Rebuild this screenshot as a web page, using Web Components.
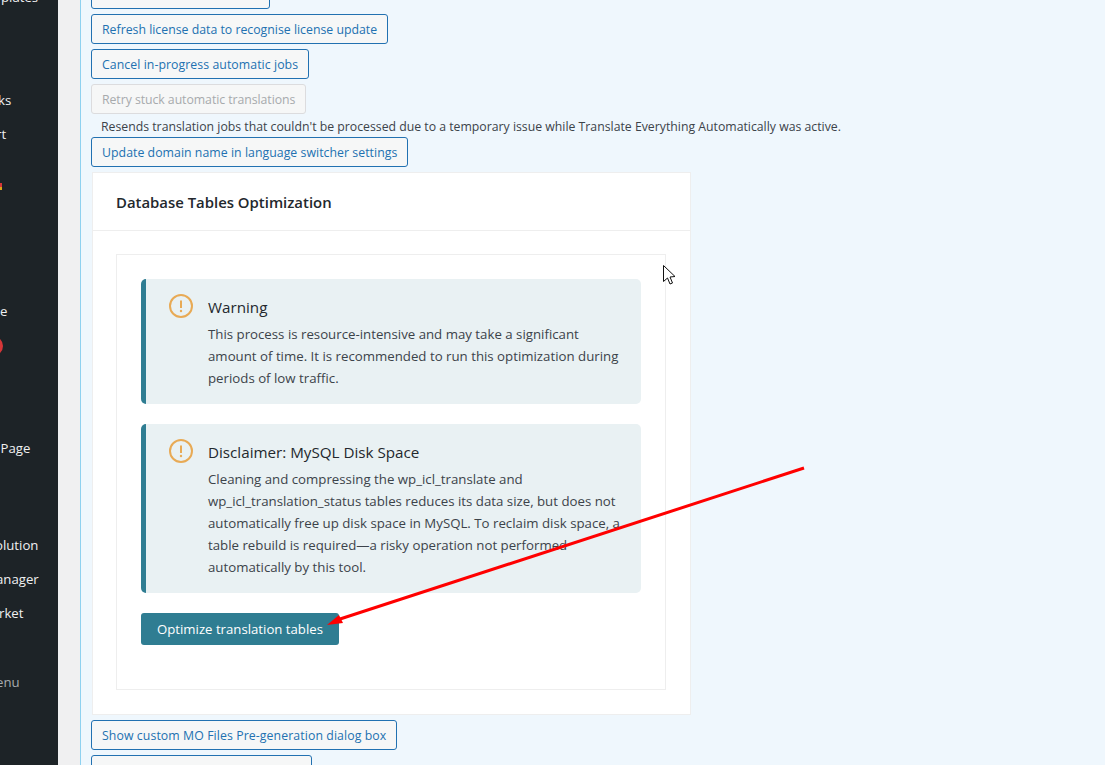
<!DOCTYPE html>
<html lang="en">
<head>
<meta charset="utf-8">
<title>Database Tables Optimization</title>
<style>
html,body{margin:0;height:765px;overflow:hidden;background:#f0f0f1}
body{font-family:"Open Sans","Noto Sans",sans-serif;font-size:13px}
</style>
</head>
<body>
<admin-shell>
  <side-menu slot="side">
    <side-item top="-12" shift="1">plates</side-item>
    <side-item top="85" shift="-2">ks</side-item>
    <side-item top="16" shift="-4">rt</side-item>
    <side-flag top="40"></side-flag>
    <side-item top="112" shift="0">e</side-item>
    <side-badge top="16"></side-badge>
    <side-item top="83" shift="0.5">Page</side-item>
    <side-item top="79" shift="-5">olution</side-item>
    <side-item top="16" shift="-4">anager</side-item>
    <side-item top="16" shift="-1">rket</side-item>
    <side-item top="51" shift="-4" dim>enu</side-item>
  </side-menu>
  <tool-button style="margin-top:-21px;width:179px"></tool-button>
  <tool-button>Refresh license data to recognise license update</tool-button>
  <tool-button style="letter-spacing:.06px">Cancel in-progress automatic jobs</tool-button>
  <tool-button style="letter-spacing:-.06px" disabled>Retry stuck automatic translations</tool-button>
  <tool-note>Resends translation jobs that couldn't be processed due to a temporary issue while Translate Everything Automatically was active.</tool-note>
  <tool-button style="letter-spacing:.04px">Update domain name in language switcher settings</tool-button>
  <opt-card heading="Database Tables Optimization">
    <warn-notice heading="Warning">This process is resource-intensive and may take a significant amount of time. It is recommended to run this optimization during periods of low traffic.</warn-notice>
    <warn-notice heading="Disclaimer: MySQL Disk Space">Cleaning and compressing the wp_icl_translate and wp_icl_translation_status tables reduces its data size, but does not automatically free up disk space in MySQL. To reclaim disk space, a table rebuild is required—a risky operation not performed automatically by this tool.</warn-notice>
    <primary-button>Optimize translation tables</primary-button>
  </opt-card>
  <tool-button style="letter-spacing:.087px">Show custom MO Files Pre-generation dialog box</tool-button>
  <tool-button style="width:221px"></tool-button>
  <shot-overlay slot="overlay"></shot-overlay>
</admin-shell>
<script>
function define(name, css, html, init){
  customElements.define(name, class extends HTMLElement{
    connectedCallback(){
      if(this.shadowRoot) return;
      const r=this.attachShadow({mode:'open'});
      r.innerHTML='<style>'+css+'</style>'+(typeof html==='function'?html(this):html);
      if(init) init(this,r);
    }
  });
}
define('admin-shell',`
  :host{display:flex;height:765px;overflow:hidden;position:relative;color:#3c434a}
  .gutter{width:22px;flex:none;background:#f0f0f1}
  main{flex:1;min-width:0;border-left:1px solid #8ed1f0;background:#eff7fd;padding-left:10px;display:flex;flex-direction:column;align-items:flex-start;gap:5px}
`,`<slot name="side"></slot><div class="gutter"></div><main><slot></slot></main><slot name="overlay"></slot>`);

define('side-menu',`
  :host{display:flex;flex-direction:column;align-items:flex-start;width:58px;flex:none;background:#1d2327;overflow:hidden;height:765px}
`,`<slot></slot>`);

define('side-item',`
  :host{display:block;white-space:nowrap;height:18px;line-height:18px;font-size:13.2px;color:#f0f0f1}
  :host([dim]){color:#a7aaad}
`,`<slot></slot>`,(el)=>{
  el.style.marginTop=el.getAttribute('top')+'px';
  el.style.marginLeft=el.getAttribute('shift')+'px';
});

define('side-flag',`
  :host{display:block;width:1.5px;height:7px;background:linear-gradient(#d63638 50%,#dba617 50%)}
`,``,(el)=>{el.style.marginTop=el.getAttribute('top')+'px';});

define('side-badge',`
  :host{display:block;width:20px;height:20px;margin-left:-17px;border-radius:50%;background:#d63638}
`,``,(el)=>{el.style.marginTop=el.getAttribute('top')+'px';});

define('tool-button',`
  :host{display:inline-flex;flex:none;align-items:center;height:30px;box-sizing:border-box;padding:0 10px;border:1px solid #2271b1;border-radius:3px;background:#f6f7f7;color:#2271b1;font-size:12.3px;white-space:nowrap}
  :host([disabled]){border-color:#dcdcde;color:#a7aaad}
`,`<slot></slot>`);

define('tool-note',`
  :host{display:block;flex:none;height:13px;line-height:15px;font-size:12.27px;margin-left:10px;white-space:nowrap;color:#3c434a}
`,`<slot></slot>`);

define('opt-card',`
  :host{display:block;flex:none;box-sizing:border-box;width:599px;height:543px;margin-left:1px;background:#fff;border:1px solid #eeeeee}
  header{height:58px;box-sizing:border-box;border-bottom:1px solid #eeeeee;padding-left:23px;display:flex;align-items:center;font-size:14.9px;font-weight:600;color:#23282d}
  .body{padding:23px 24px 25px 23px}
  .inner{box-sizing:border-box;width:550px;height:436px;border:1px solid #eeeeee;padding:24px;display:flex;flex-direction:column;align-items:flex-start;gap:20px}
`,(el)=>`<header>${el.getAttribute('heading')}</header><div class="body"><div class="inner"><slot></slot></div></div>`);

define('warn-notice',`
  :host{display:flex;box-sizing:border-box;width:500px;background:#e9f1f3;border-left:5px solid #2f7d92;border-radius:5px;padding:15px 20px 15px 23px;gap:15px;color:#3c434a}
  svg{flex:none;width:24px;height:24px;display:block}
  h3{margin:1px 0 4px;font-size:15.2px;font-weight:400;line-height:24px;color:#23282d}
  p{margin:0;font-size:13.25px;line-height:22px}
`,(el)=>`<svg viewBox="0 0 24 24" aria-hidden="true"><circle cx="12" cy="12" r="11" fill="none" stroke="#e8aa55" stroke-width="2"/><path d="M12 6.5v7.5" stroke="#e8aa55" stroke-width="2" fill="none"/><circle cx="12" cy="17" r="1.2" fill="#e8aa55"/></svg><div><h3>${el.getAttribute('heading')}</h3><p><slot></slot></p></div>`);

define('primary-button',`
  :host{display:inline-flex;align-items:center;height:32px;box-sizing:border-box;padding:0 16px;background:#2f7d92;color:#fff;border-radius:3px;font-size:13.2px;white-space:nowrap}
`,`<slot></slot>`);

define('shot-overlay',`
  :host{position:absolute;inset:0;pointer-events:none;display:block}
  svg{position:absolute;left:0;top:0}
`,`<svg width="1105" height="765" viewBox="0 0 1105 765" aria-hidden="true">
  <path d="M804 468L337 620" stroke="#f00" stroke-width="3" fill="none"/>
  <path d="M327 625L339 615L343 623Z" fill="#f00"/>
  <path d="M663.5 265.5V281.5L667.5 278L670 284L672.5 283L670 277L675 276.5Z" fill="#fff" stroke="#111" stroke-width="1"/>
</svg>`);
</script>
</body>
</html>
